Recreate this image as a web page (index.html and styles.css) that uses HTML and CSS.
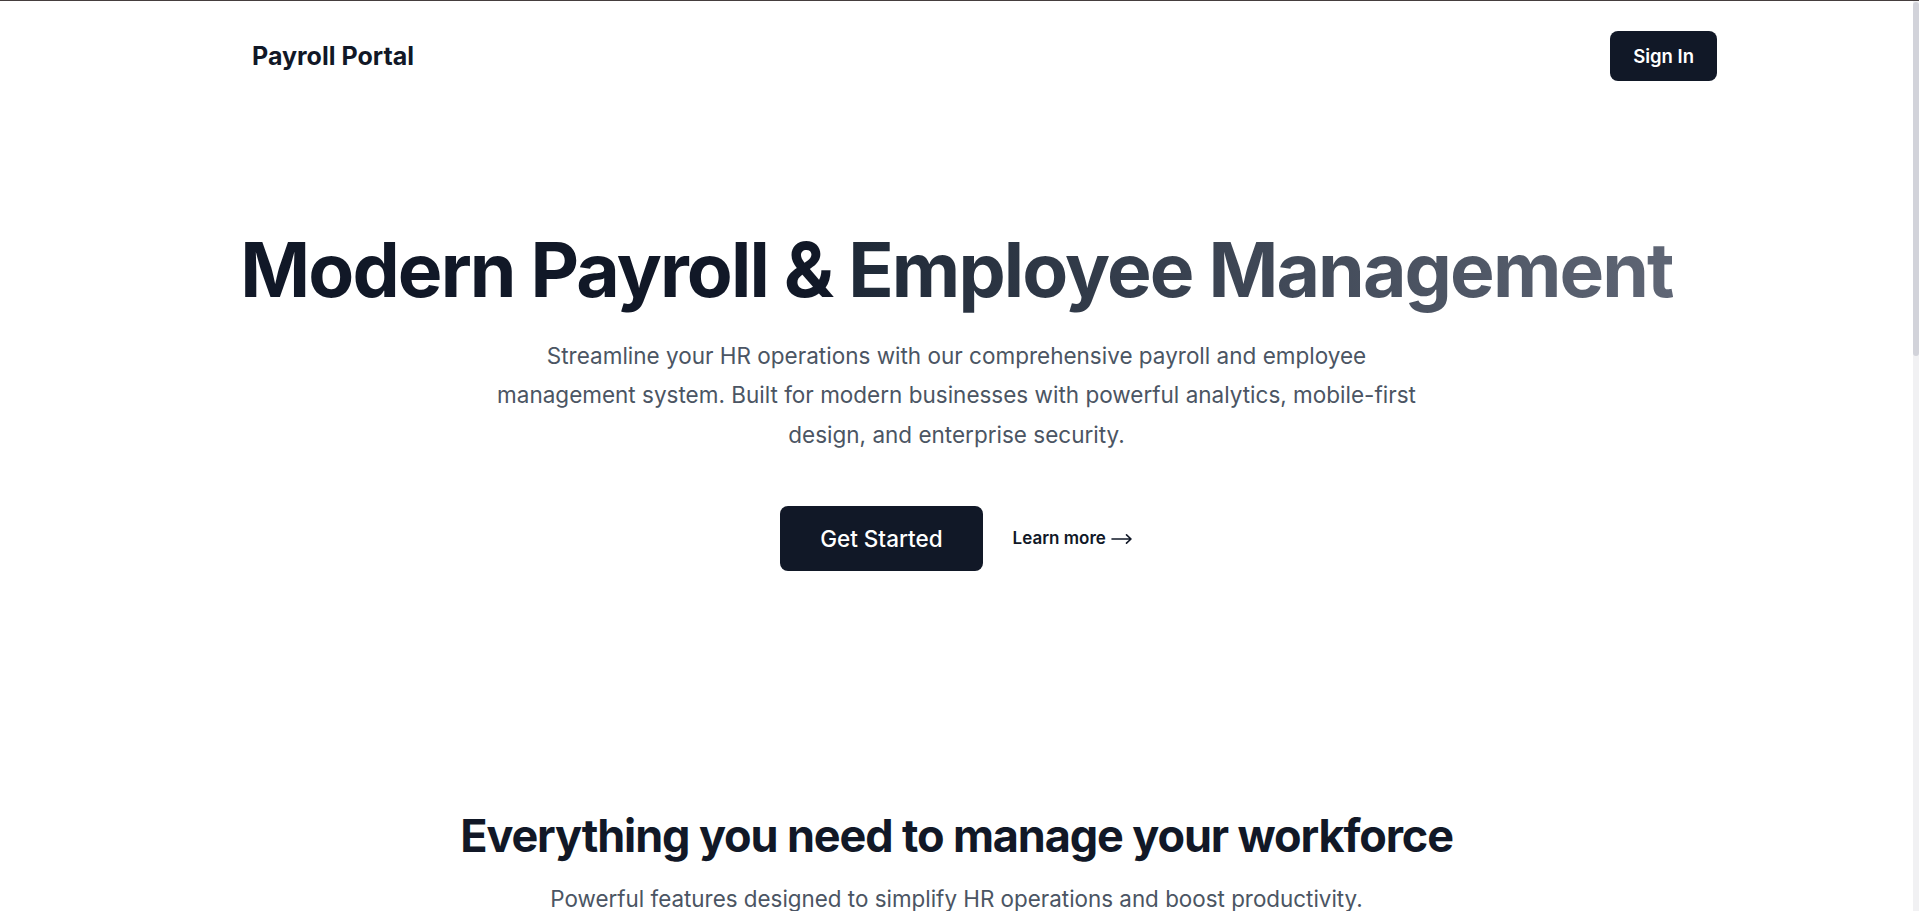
FILE: index.html
```html
<!DOCTYPE html>
<html lang="en">
<head>
<meta charset="utf-8">
<title>Payroll Portal</title>
<link rel="stylesheet" href="styles.css">
</head>
<body>
<div class="page">
  <header class="nav">
    <div class="brand">Payroll Portal</div>
    <a class="btn-signin" href="#">Sign In</a>
  </header>

  <section class="hero">
    <h1 class="hero-title">Modern Payroll &amp; <span class="grad">Employee Management</span></h1>
    <p class="hero-text">Streamline your HR operations with our comprehensive payroll and employee management system. Built for modern businesses with powerful analytics, mobile-first design, and enterprise security.</p>
    <div class="hero-actions">
      <a class="btn-primary" href="#">Get Started</a>
      <a class="link-more" href="#">Learn more<svg class="arrow" width="22" height="12" viewBox="0 0 22 12" aria-hidden="true"><path d="M1 6H20M15.5 1.8L20 6L15.5 10.2" fill="none" stroke="#111827" stroke-width="1.6" stroke-linecap="round" stroke-linejoin="round"/></svg></a>
    </div>
  </section>

  <section class="features">
    <h2 class="features-title">Everything you need to manage your workforce</h2>
    <p class="features-text">Powerful features designed to simplify HR operations and boost productivity.</p>
  </section>
</div>
<div class="scrollbar"><div class="thumb"></div></div>
</body>
</html>
```

FILE: styles.css
```css
html, body {
  margin: 0;
  padding: 0;
  height: 100%;
  overflow: hidden;
}
body {
  font-family: Inter, "Noto Sans", sans-serif;
  background: #ffffff;
  color: #111827;
  border-top: 1px solid #453e3e;
  box-sizing: border-box;
  position: relative;
}
a { text-decoration: none; }

.page {
  width: 1913px;
}

.nav {
  display: flex;
  align-items: center;
  justify-content: space-between;
  padding: 30px 196px 0 252px;
}
.brand {
  font-size: 25px;
  font-weight: 700;
  color: #111827;
}
.btn-signin {
  display: inline-flex;
  align-items: center;
  justify-content: center;
  height: 50px;
  padding: 0 23px;
  border-radius: 8px;
  background: #111827;
  color: #ffffff;
  font-size: 18.5px;
  font-weight: 600;
}

.hero {
  display: flex;
  flex-direction: column;
  align-items: center;
  text-align: center;
}
.hero-title {
  margin: 151px 0 0;
  font-size: 75px;
  line-height: 75px;
  font-weight: 700;
  letter-spacing: -0.025em;
  color: #111827;
}
.grad {
  background: linear-gradient(90deg, #1f2937, #5f6675);
  -webkit-background-clip: text;
  background-clip: text;
  color: transparent;
}
.hero-text {
  margin: 29px 0 0;
  max-width: 960px;
  font-size: 22.5px;
  line-height: 39.3px;
  color: #4b5563;
}
.hero-actions {
  margin-top: 52px;
  display: flex;
  align-items: center;
  gap: 30px;
}
.btn-primary {
  display: inline-flex;
  align-items: center;
  justify-content: center;
  height: 65px;
  padding: 0 40px;
  border-radius: 8px;
  background: #111827;
  color: #ffffff;
  font-size: 22.5px;
  font-weight: 500;
}
.link-more {
  display: inline-flex;
  align-items: center;
  gap: 5px;
  font-size: 17px;
  font-weight: 600;
  color: #111827;
}
.arrow {
  display: block;
  margin-top: 1px;
}

.features {
  margin-top: 237px;
  display: flex;
  flex-direction: column;
  align-items: center;
  text-align: center;
}
.features-title {
  margin: 0;
  font-size: 45px;
  line-height: 56px;
  font-weight: 700;
  letter-spacing: -0.025em;
  color: #111827;
}
.features-text {
  margin: 19px 0 0;
  font-size: 22.4px;
  line-height: 32px;
  color: #4b5563;
}

.scrollbar {
  position: fixed;
  top: 1px;
  right: 0;
  width: 6px;
  bottom: 0;
  background: #f1f1f3;
}
.thumb {
  height: 354px;
  margin-top: 1px;
  background: #d2d3da;
  border-radius: 3px;
}
```
